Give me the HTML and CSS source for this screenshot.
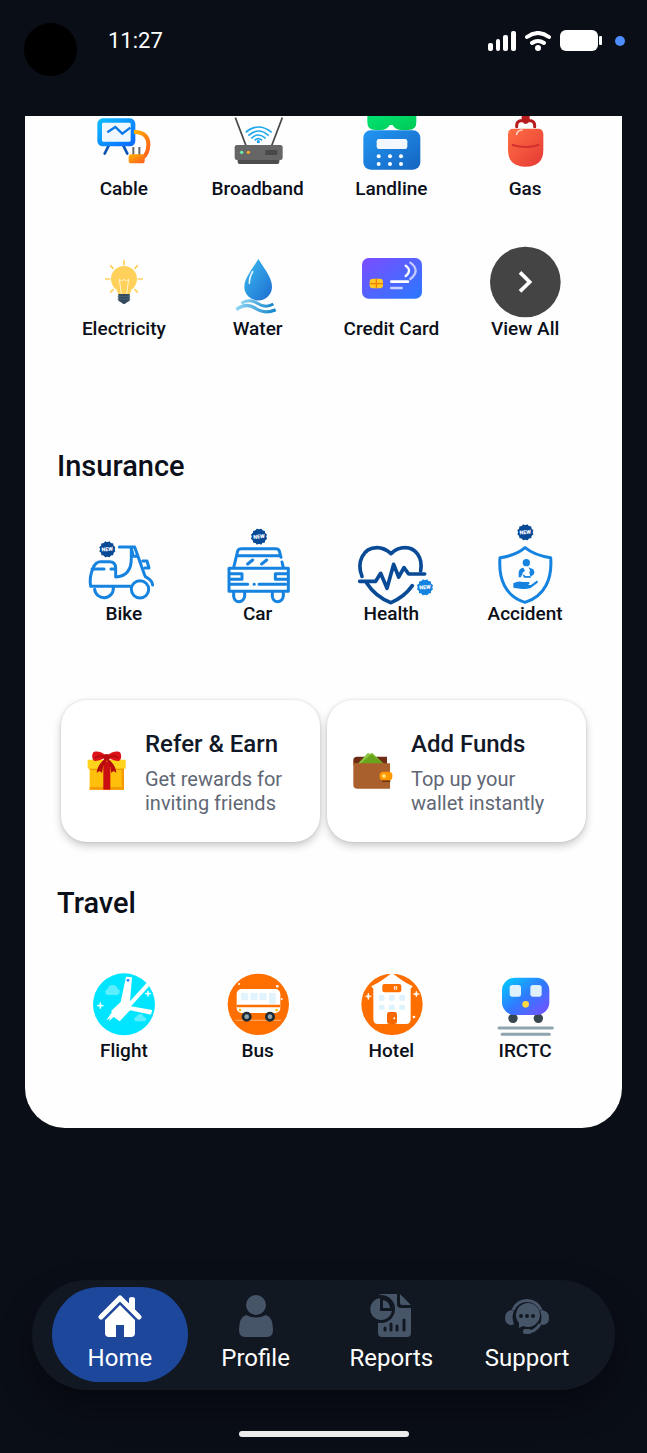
FILE: index.html
```html
<!DOCTYPE html>
<html lang="en">
<head>
    <meta charset="UTF-8">
    <meta name="viewport" content="width=device-width, initial-scale=1.0">
    <title>Home</title>
    <link rel="stylesheet" href="styles.css">
</head>
<body>
    <!-- Shared gradients and the NEW badge -->
    <svg class="defs" width="0" height="0" aria-hidden="true">
        <defs>
            <linearGradient id="g-screen" x1="0" y1="0" x2="1" y2="1"><stop offset="0" stop-color="#10c0ff"/><stop offset="1" stop-color="#0a66ff"/></linearGradient>
            <linearGradient id="g-plug" x1="0" y1="0" x2="1" y2="1"><stop offset="0" stop-color="#ffb300"/><stop offset="1" stop-color="#ff5a1f"/></linearGradient>
            <linearGradient id="g-phone" x1="0" y1="0" x2="1" y2="1"><stop offset="0" stop-color="#2196f3"/><stop offset="1" stop-color="#1565c0"/></linearGradient>
            <linearGradient id="g-green" x1="0" y1="0" x2="1" y2="1"><stop offset="0" stop-color="#00e676"/><stop offset="1" stop-color="#00c853"/></linearGradient>
            <linearGradient id="g-gas" x1="0" y1="0" x2="1" y2="1"><stop offset="0" stop-color="#ff7043"/><stop offset="1" stop-color="#e53935"/></linearGradient>
            <linearGradient id="g-drop" x1="0" y1="0" x2="1" y2="1"><stop offset="0" stop-color="#3dbcf2"/><stop offset="1" stop-color="#1c6dd0"/></linearGradient>
            <linearGradient id="g-wave" x1="0" y1="0" x2="1" y2="0"><stop offset="0" stop-color="#8fd6f3"/><stop offset="1" stop-color="#1384cc"/></linearGradient>
            <linearGradient id="g-card" x1="0" y1="0" x2="1" y2="1"><stop offset="0" stop-color="#7c4dff"/><stop offset="1" stop-color="#2979ff"/></linearGradient>
            <linearGradient id="g-train" x1="0" y1="0" x2="1" y2="1"><stop offset="0" stop-color="#00d0ff"/><stop offset="0.5" stop-color="#2f7bff"/><stop offset="1" stop-color="#7a4dff"/></linearGradient>
            <g id="badge">
                <circle r="22"/>
                <rect x="-18" y="-18" width="36" height="36" rx="2"/>
                <rect x="-18" y="-18" width="36" height="36" rx="2" transform="rotate(30)"/>
                <rect x="-18" y="-18" width="36" height="36" rx="2" transform="rotate(60)"/>
                <text class="badge-text" y="5" transform="rotate(-6)">NEW</text>
            </g>
        </defs>
    </svg>

    <header class="status-bar">
        <span class="camera"></span>
        <span class="time">11:27</span>
        <div class="status-icons">
            <svg width="28" height="20" viewBox="0 0 28 20" fill="#fff"><rect y="12" width="5" height="8" rx="2"/><rect x="8" y="8" width="4" height="12" rx="2"/><rect x="15" y="4" width="5" height="16" rx="2"/><rect x="23" y="0" width="5" height="20" rx="2"/></svg>
            <svg width="26" height="20" viewBox="0 0 26 20" fill="none" stroke="#fff" stroke-width="4" stroke-linecap="round"><path d="M2 6Q13-2 24 6M7 12Q13 8 19 12"/><circle cx="13" cy="17" r="3" fill="#fff" stroke="none"/></svg>
            <svg width="42" height="21" viewBox="0 0 42 21" fill="#fff"><rect width="38" height="21" rx="6"/><rect x="39" y="6" width="3" height="9" rx="1"/></svg>
            <span class="dot"></span>
        </div>
    </header>

    <main class="panel">
        <section class="services services-bills">
            <a href="#" class="service">
                <svg viewBox="42 -24 240 240">
                    <path d="M116 122l-12 24M160 122l12 24" stroke="#0d55b0" stroke-width="8" stroke-linecap="round"/>
                    <rect x="82" y="40" width="114" height="84" rx="16" fill="url(#g-screen)"/>
                    <rect x="96" y="53" width="86" height="57" rx="4" fill="#f0f8ff"/>
                    <path d="M112 82l24-16 21 20 24-18" fill="none" stroke="#0a78e8" stroke-width="7"/>
                    <path d="M192 80Q236 82 235 120Q234 148 216 160" fill="none" stroke="url(#g-plug)" stroke-width="12"/>
                    <path d="M190 126v24M208 126v24" stroke="#666" stroke-width="6"/>
                    <rect x="176" y="148" width="48" height="27" rx="8" fill="url(#g-plug)"/>
                </svg>
                <span>Cable</span>
            </a>
            <a href="#" class="service">
                <svg viewBox="441 -24 240 240">
                    <path d="M493 38l32 84M634 38l-32 84" stroke="#4a4a4a" stroke-width="5"/>
                    <rect x="500" y="160" width="125" height="17" rx="6" fill="#4d4d4d"/>
                    <rect x="491" y="120" width="144" height="45" rx="7" fill="#666"/>
                    <circle cx="512" cy="142" r="5" fill="#69f0ae"/>
                    <circle cx="532" cy="142" r="5" fill="#ffa726"/>
                    <rect x="583" y="135" width="36" height="15" fill="#484848"/>
                    <path d="M524 82Q562 50 602 82M532 92Q562 64 593 92M541 100Q562 80 584 100M551 106Q562 96 573 106" fill="none" stroke="#1fa8f2" stroke-width="5"/>
                    <circle cx="562" cy="110" r="5" fill="#1fa8f2"/>
                </svg>
                <span>Broadband</span>
            </a>
            <a href="#" class="service">
                <svg viewBox="60 -24 240 240">
                    <path d="M109 20h147v32q0 23-24 23h-18q-22 0-29-15h-9q-7 15-29 15h-14q-24 0-24-23z" fill="url(#g-green)"/>
                    <rect x="97" y="76" width="171" height="118" rx="22" fill="url(#g-phone)"/>
                    <rect x="137" y="102" width="92" height="30" rx="7" fill="#f3f8fe"/>
                    <g fill="#fff"><circle cx="143" cy="154" r="6"/><circle cx="177" cy="154" r="6"/><circle cx="210" cy="154" r="6"/><circle cx="143" cy="177" r="6"/><circle cx="177" cy="177" r="6"/><circle cx="210" cy="177" r="6"/></g>
                </svg>
                <span>Landline</span>
            </a>
            <a href="#" class="service">
                <svg viewBox="460 -24 240 240">
                    <path d="M555 65v-4q0-10 11-14h32q11 4 11 14v4" fill="none" stroke="#b71c1c" stroke-width="9" stroke-linecap="round"/>
                    <path d="M570 20h24v28l-8 8h-8l-8-8z" fill="#b71c1c"/>
                    <path d="M545 71h73q17 0 17 17v47q0 50-53 50t-53-50V88q0-17 16-17z" fill="url(#g-gas)"/>
                    <path d="M555 88q2-12 16-13" fill="none" stroke="#ffd8cc" stroke-width="5" stroke-linecap="round"/>
                    <path d="M543 120q39 12 78 0" fill="none" stroke="#d32f2f" stroke-width="6" stroke-linecap="round"/>
                </svg>
                <span>Gas</span>
            </a>

            <a href="#" class="service">
                <svg viewBox="42 6 240 240">
                    <path d="M162 77v12M122 92l7 8M202 92l-7 8M107 132h12M205 132h12M122 171l8-7M202 171l-8-7" stroke="#ffd05a" stroke-width="5" stroke-linecap="round"/>
                    <path d="M144 178q0-12-11-20a39 39 0 1 1 58 0q-11 8-11 20z" fill="#ffd05a"/>
                    <path d="M154 177l-6-44 7 5 7-5 7 5 7-5-6 44" fill="none" stroke="#fff3cf" stroke-width="3"/>
                    <path d="M145 177h34v20l-10 6q-7 8-14 0l-10-6z" fill="#34495e"/>
                    <path d="M142 184h39M142 192h39" stroke="#586c80" stroke-width="2"/>
                </svg>
                <span>Electricity</span>
            </a>
            <a href="#" class="service">
                <svg viewBox="441 6 240 240">
                    <path d="M562 72C585 108 603 130 603 155A41 41 0 0 1 520 155C520 130 540 108 562 72z" fill="url(#g-drop)"/>
                    <path d="M535 145q0-20 10-35" fill="none" stroke="#e6f6ff" stroke-width="5" stroke-linecap="round"/>
                    <path d="M511 205q24-16 48 0 24 16 48 2" fill="none" stroke="url(#g-wave)" stroke-width="9"/>
                    <path d="M496 224q28-22 56-5 28 20 62 5" fill="none" stroke="url(#g-wave)" stroke-width="10"/>
                </svg>
                <span>Water</span>
            </a>
            <a href="#" class="service">
                <svg viewBox="60 6 240 240">
                    <rect x="93" y="69" width="180" height="122" rx="20" fill="url(#g-card)"/>
                    <rect x="116" y="131" width="40" height="29" rx="9" fill="#ffca28"/>
                    <path d="M116 146h40M136 131v29" stroke="#f57c00" stroke-width="4"/>
                    <path d="M181 140h50" stroke="#fff" stroke-width="8" stroke-linecap="round"/>
                    <path d="M181 159h31" stroke="#c9d2ff" stroke-width="8" stroke-linecap="round"/>
                    <path d="M224 92q20 15 0 31" fill="none" stroke="#fff" stroke-width="7" stroke-linecap="round"/>
                    <path d="M238 83q32 24 0 49" fill="none" stroke="#c3c9ff" stroke-width="7" stroke-linecap="round"/>
                </svg>
                <span>Credit Card</span>
            </a>
            <button type="button" class="service">
                <svg viewBox="460 6 240 240">
                    <circle cx="581" cy="141" r="106" fill="#444"/>
                    <path d="M565 112l29 29-29 28" fill="none" stroke="#fff" stroke-width="11"/>
                </svg>
                <span>View All</span>
            </button>
        </section>

        <h2>Insurance</h2>
        <section class="services">
            <a href="#" class="service">
                <svg class="line" viewBox="42 21 240 240">
                    <path d="M148 96h46l29 82q2 8 8 10 15 8 17 22"/>
                    <path d="M184 98v32q0 54-47 56v-27q0-19-19-19H92q-16 0-23 20-12 26-7 54h122"/>
                    <path d="M66 162h36M123 162h12M184 100l6 24h13M218 138h13l6 21h-13"/>
                    <circle cx="210" cy="223" r="26"/>
                    <path d="M74 223A28 28 0 0 0 130 217"/>
                    <use href="#badge" class="badge" x="112" y="103"/>
                </svg>
                <span>Bike</span>
            </a>
            <a href="#" class="service">
                <svg class="line" viewBox="441 21 240 240">
                    <path d="M488 158l12-50q2-7 12-7h101q10 0 12 7l5 19M633 141l4 16M502 122h124"/>
                    <path d="M474 160h178v69H474z"/>
                    <path d="M476 176h37v17h-37M650 176h-37v17h37M476 208h54M549 208h1M564 208h80M530 147l15-12M572 147l15-12"/>
                    <path d="M488 232v12q2 16 16 16t17-16v-12M604 232v12q2 16 16 16t17-16v-12"/>
                    <use href="#badge" class="badge" x="564" y="65"/>
                </svg>
                <span>Car</span>
            </a>
            <a href="#" class="service">
                <svg class="line line-dark" viewBox="60 21 240 240">
                    <path d="M93 184C76 142 96 98 138 98Q160 98 180 116Q198 98 222 98C254 98 276 128 269 168M107 204Q134 246 180 263Q220 246 244 212"/>
                    <path d="M86 199h48l15-24 19 45 20-72 15 38 16-28 14 19h48"/>
                    <use href="#badge" class="badge badge-light" x="282" y="217"/>
                </svg>
                <span>Health</span>
            </a>
            <a href="#" class="service">
                <svg class="line" viewBox="460 21 240 240">
                    <path d="M580 98Q610 122 657 128C662 190 640 244 580 262C520 244 500 190 505 128Q552 122 580 98z"/>
                    <g fill="#1583df" stroke="none">
                        <circle cx="584" cy="143" r="11"/>
                        <path d="M561 187v-14q1-14 14-15l5 9-7 6-5 14zM590 157l15 6q5 8 2 14l-10 9-4-12 2-9zM572 177l5 11h21v-5h-16zM545 205q15-9 29-4h18q4 6-4 9h10l17-13q6 0 2 7l-20 15q-14 5-32 2l-20-3z"/>
                    </g>
                    <use href="#badge" class="badge" x="581" y="52"/>
                </svg>
                <span>Accident</span>
            </a>
        </section>

        <section class="promos">
            <a href="#" class="promo">
                <svg viewBox="110 184 120 120">
                    <path d="M118 232h103v68H118z" fill="#ffbf0b"/>
                    <path d="M118 292h103v8H118zM214 236h7v64h-7z" fill="#f59a00"/>
                    <path d="M112 210h114v27H112z" fill="#ffd21c"/>
                    <path d="M118 237h103v4H118z" fill="#f09a00"/>
                    <path d="M159 215h21v85h-21z" fill="#c90d10"/>
                    <path d="M163 208q-22 18-24 41l9-5 7 6q0-20 14-38M174 208q22 18 24 41l-9-5-6 6q0-20-13-38" fill="#b70b0e"/>
                    <path d="M168 199c-14-16-36-16-40-10-5 10-2 27 7 25 14-1 24-5 33-15zM170 199c14-16 36-16 40-10 5 10 2 27-7 25-14-1-24-5-33-15z" fill="#dd1219"/>
                    <path d="M160 202q-14-8-27 4M178 202q14-8 27 4" fill="none" stroke="#a80a0c" stroke-width="4"/>
                    <circle cx="169" cy="203" r="10" fill="#b80c10"/>
                </svg>
                <div>
                    <h3>Refer &amp; Earn</h3>
                    <p>Get rewards for<br>inviting friends</p>
                </div>
            </a>
            <a href="#" class="promo">
                <svg viewBox="98 184 120 120">
                    <path d="M99 212q0-11 11-11h90v26H99z" fill="#6d2c13"/>
                    <path d="M112 223l31-34 6 4 6-4 36 34z" fill="#8bc53f"/>
                    <path d="M119 223l35-30 36 30z" fill="#69a51c"/>
                    <path d="M99 210q0 11 11 11h99v76h-98q-12 0-12-11z" fill="#a9602c"/>
                    <path d="M182 272h28v5h-22z" fill="#6f3611"/>
                    <rect x="178" y="246" width="38" height="26" rx="11" fill="#ff9800"/>
                    <circle cx="191" cy="259" r="6" fill="#ffe07a"/>
                </svg>
                <div>
                    <h3>Add Funds</h3>
                    <p>Top up your<br>wallet instantly</p>
                </div>
            </a>
        </section>

        <h2>Travel</h2>
        <section class="services">
            <a href="#" class="service">
                <svg viewBox="42 -3 240 240">
                    <circle cx="162" cy="133" r="93" fill="#00e5ff"/>
                    <path d="M116 105a9 9 0 0 1-3-18q2-12 15-12t14 11q9 1 7 11-1 8-8 8zM200 184a7 7 0 0 1-1-14q3-9 12-8t10 9q9 1 7 8-1 5-6 5z" fill="#5ceeff"/>
                    <path d="M168 50l18 2-6 72 49-54q9 1 7 10l-53 59 64 11-4 14-63-13-31 33-18-13-14 13 3-9-11 6 17-25-3-3 29-27z" fill="#fff"/>
                    <path d="M91 127l2 8 8 2-8 2-2 8-2-8-8-2 8-2zM234 92l2 7 7 2-7 2-2 7-2-7-7-2 7-2z" fill="#fff" stroke="#fff" stroke-width="2"/>
                    <circle cx="174" cy="61" r="4" fill="#2979ff"/>
                </svg>
                <span>Flight</span>
            </a>
            <a href="#" class="service">
                <svg viewBox="441 -3 240 240">
                    <circle cx="562" cy="133" r="92" fill="#ff6f00"/>
                    <path d="M493 181h137" stroke="#ffa35c" stroke-width="4"/>
                    <rect x="497" y="87" width="131" height="72" rx="15" fill="#fff"/>
                    <g fill="#e1f3fc"><rect x="510" y="99" width="22" height="22" rx="4"/><rect x="538" y="99" width="22" height="22" rx="4"/><rect x="565" y="99" width="22" height="22" rx="4"/><rect x="594" y="99" width="20" height="33" rx="4"/></g>
                    <path d="M497 138h131" stroke="#ff6f00" stroke-width="8"/>
                    <circle cx="507" cy="150" r="4" fill="#ffc107"/><circle cx="617" cy="150" r="4" fill="#ffc107"/>
                    <g fill="#90a4ae" stroke="#1d2c36" stroke-width="8"><circle cx="527" cy="170" r="11"/><circle cx="597" cy="170" r="11"/></g>
                    <g fill="#fff"><circle cx="504" cy="72" r="3"/><circle cx="619" cy="79" r="4"/><circle cx="632" cy="117" r="3"/></g>
                </svg>
                <span>Bus</span>
            </a>
            <a href="#" class="service">
                <svg viewBox="60 -3 240 240">
                    <circle cx="183" cy="133" r="92" fill="#ff6f00"/>
                    <path d="M121 79q20-10 34-20l28-20 28 20q14 10 34 20l-6 7v90q0 16-14 16h-84q-14 0-14-16V86z" fill="#fff"/>
                    <rect x="154" y="72" width="57" height="25" rx="6" fill="#ff6f00"/>
                    <text class="hotel-text" x="194" y="89">H</text>
                    <g fill="#def3fd"><rect x="144" y="105" width="16" height="17" rx="3"/><rect x="174" y="105" width="17" height="17" rx="3"/><rect x="205" y="105" width="17" height="17" rx="3"/><rect x="144" y="134" width="16" height="16" rx="3"/><rect x="174" y="134" width="17" height="16" rx="3"/><rect x="205" y="134" width="17" height="16" rx="3"/></g>
                    <rect x="168" y="156" width="30" height="36" rx="7" fill="#f76800"/>
                    <circle cx="190" cy="175" r="3" fill="#fff"/>
                    <path d="M112 99l2 8 7 2-7 2-2 8-2-8-7-2 7-2zM256 93l2 7 7 2-7 2-2 7-2-7-7-2 7-2z" fill="#fff" stroke="#fff" stroke-width="2"/>
                    <circle cx="249" cy="171" r="4" fill="#fff"/>
                </svg>
                <span>Hotel</span>
            </a>
            <a href="#" class="service">
                <svg viewBox="460 -3 240 240">
                    <circle cx="544" cy="175" r="14" fill="#37474f"/><circle cx="620" cy="175" r="14" fill="#37474f"/>
                    <rect x="511" y="53" width="142" height="112" rx="38" fill="url(#g-train)"/>
                    <rect x="534" y="75" width="34" height="35" rx="8" fill="#def1fc"/><rect x="596" y="75" width="34" height="35" rx="8" fill="#def1fc"/>
                    <circle cx="582" cy="133" r="10" fill="#ffd740"/>
                    <path d="M502 204h160M511 223h142" stroke="#90a4ae" stroke-width="9" stroke-linecap="round"/>
                </svg>
                <span>IRCTC</span>
            </a>
        </section>
    </main>

    <nav class="tab-bar">
        <a href="#" class="tab active">
            <svg viewBox="0 0 44 44" fill="currentColor">
                <path d="M3 23L22 4l19 19" fill="none" stroke="currentColor" stroke-width="5" stroke-linecap="round" stroke-linejoin="round"/>
                <path d="M31 10V5q0-2 3-2t3 2v11z"/>
                <path d="M22 11l15 15v13q0 4-4 4h-7V31h-8v12h-7q-4 0-4-4V26z"/>
            </svg>
            <span>Home</span>
        </a>
        <a href="#" class="tab">
            <svg viewBox="0 0 44 44" fill="currentColor">
                <circle cx="22" cy="11" r="10"/>
                <path d="M12 21q10 5 20 0 7 2 7 15 0 7-6 7H11q-6 0-6-7 0-13 7-15z"/>
            </svg>
            <span>Profile</span>
        </a>
        <a href="#" class="tab">
            <svg viewBox="0 0 44 44" fill="currentColor">
                <path d="M13 0h15v10q0 4 4 4h10v25q0 4-4 4H13q-4 0-4-4V4q0-4 4-4zM31 0l11 11h-9q-2 0-2-2z"/>
                <circle cx="12" cy="15" r="14" fill="#121822"/>
                <path d="M11 4v13h12a11 11 0 1 1-12-13z"/>
                <path d="M14 6v8h7q-1-7-7-8z"/>
                <path d="M16 34v2M22 30v6M28 32v4M35 26v10" stroke="#121822" stroke-width="3" stroke-linecap="round"/>
            </svg>
            <span>Reports</span>
        </a>
        <a href="#" class="tab">
            <svg viewBox="0 0 44 44" fill="currentColor">
                <path d="M8 16a15 15 0 0 1 28 0M35 30q-4 7-11 8" fill="none" stroke="currentColor" stroke-width="3"/>
                <path d="M7 16q-7 1-7 8 0 7 7 7l2-1q-3-7 0-13zM37 16q7 1 7 8 0 7-7 7l-2-1q3-7 0-13z"/>
                <rect x="18" y="35" width="8" height="5" rx="2"/>
                <path d="M14 34v-5a12 12 0 1 1 9 4q-3 0-5-1z"/>
                <g fill="#121822"><circle cx="16" cy="22" r="2"/><circle cx="22" cy="22" r="2"/><circle cx="28" cy="22" r="2"/></g>
            </svg>
            <span>Support</span>
        </a>
    </nav>
    <div class="home-indicator"></div>
</body>
</html>
```
FILE: styles.css
```css
* {
    box-sizing: border-box;
}
body {
    margin: 0;
    min-height: 100vh;
    display: flex;
    flex-direction: column;
    background: #0a0e17;
    color: #0b0f19;
    font-family: Roboto, Arial, sans-serif;
}
a {
    color: inherit;
    text-decoration: none;
}
svg {
    display: block;
    flex: none;
}
.defs {
    position: absolute;
}

/* Status bar */
.status-bar {
    display: flex;
    align-items: flex-start;
    height: 116px;
    padding: 23px 22px 0 24px;
    color: #fff;
}
.camera {
    width: 53px;
    height: 53px;
    border-radius: 50%;
    background: #000;
}
.time {
    margin-left: 31px;
    font-size: 22px;
    line-height: 35px;
}
.status-icons {
    display: flex;
    align-items: center;
    gap: 9px;
    height: 35px;
    margin-left: auto;
}
.dot {
    width: 10px;
    height: 10px;
    margin-left: 4px;
    border-radius: 50%;
    background: #4d8dff;
}

/* White content panel */
.panel {
    margin: 0 25px;
    padding: 0 30px 65px 32px;
    border-radius: 0 0 40px 40px;
    background: #fefefe;
    overflow: hidden;
}
h2 {
    margin: 0 0 39px;
    font-size: 29px;
    font-weight: 500;
    line-height: 34px;
}
.services {
    display: grid;
    grid-template-columns: repeat(4, 1fr);
    row-gap: 36px;
}
/* first row is scrolled partly under the header */
.services-bills {
    margin: -19px 0 108px;
}
.service {
    display: flex;
    flex-direction: column;
    align-items: center;
    padding: 0;
    border: none;
    background: none;
    color: inherit;
    font-family: inherit;
    font-size: 19px;
    font-weight: 500;
    line-height: 24px;
    white-space: nowrap;
    cursor: pointer;
}
.service svg {
    width: 80px;
    height: 80px;
    overflow: visible;
}
.line {
    fill: none;
    stroke: #1583df;
    stroke-width: 9;
    stroke-linecap: round;
    stroke-linejoin: round;
}
.line-dark {
    stroke: #084a96;
    stroke-width: 11;
}
.badge {
    fill: #084a96;
    stroke: none;
}
.badge-light {
    fill: #1583df;
}
.badge-text {
    fill: #fff;
    font-size: 16px;
    font-weight: 900;
    text-anchor: middle;
}
.hotel-text {
    fill: #fff;
    font-size: 14px;
    font-weight: 900;
    text-anchor: middle;
}

/* Promo cards */
.promos {
    display: grid;
    grid-template-columns: 1fr 1fr;
    gap: 7px;
    margin: 74px 6px 44px 4px;
}
.promo {
    display: flex;
    align-items: center;
    gap: 18px;
    height: 142px;
    padding: 0 20px 0 26px;
    border-radius: 26px;
    background: #fff;
    box-shadow: 0 4px 8px rgba(0, 0, 0, 0.2), 0 0 3px rgba(0, 0, 0, 0.12);
    white-space: nowrap;
}
.promo svg {
    width: 40px;
    height: 40px;
}
.promo h3 {
    margin: 2px 0 9px;
    color: #111827;
    font-size: 24px;
    font-weight: 500;
    line-height: 28px;
}
.promo p {
    margin: 0;
    color: #606775;
    font-size: 20px;
    line-height: 24px;
}

/* Bottom navigation */
.tab-bar {
    display: grid;
    grid-template-columns: repeat(4, 1fr);
    margin: auto 32px 41px;
    padding: 7px 20px 8px;
    border-radius: 55px;
    background: #121822;
    box-shadow: 0 16px 32px rgba(0, 0, 0, 0.4);
}
.tab {
    display: flex;
    flex-direction: column;
    align-items: center;
    gap: 6px;
    padding: 7px 0 10px;
    border-radius: 48px;
    color: #475569;
    font-size: 24px;
    line-height: 28px;
}
.tab svg {
    width: 44px;
    height: 44px;
}
.tab span {
    color: #fff;
}
.tab.active {
    background: #1d479b;
    color: #fff;
}
.home-indicator {
    align-self: center;
    width: 170px;
    height: 6px;
    margin-bottom: 16px;
    border-radius: 3px;
    background: #ececec;
}
```
